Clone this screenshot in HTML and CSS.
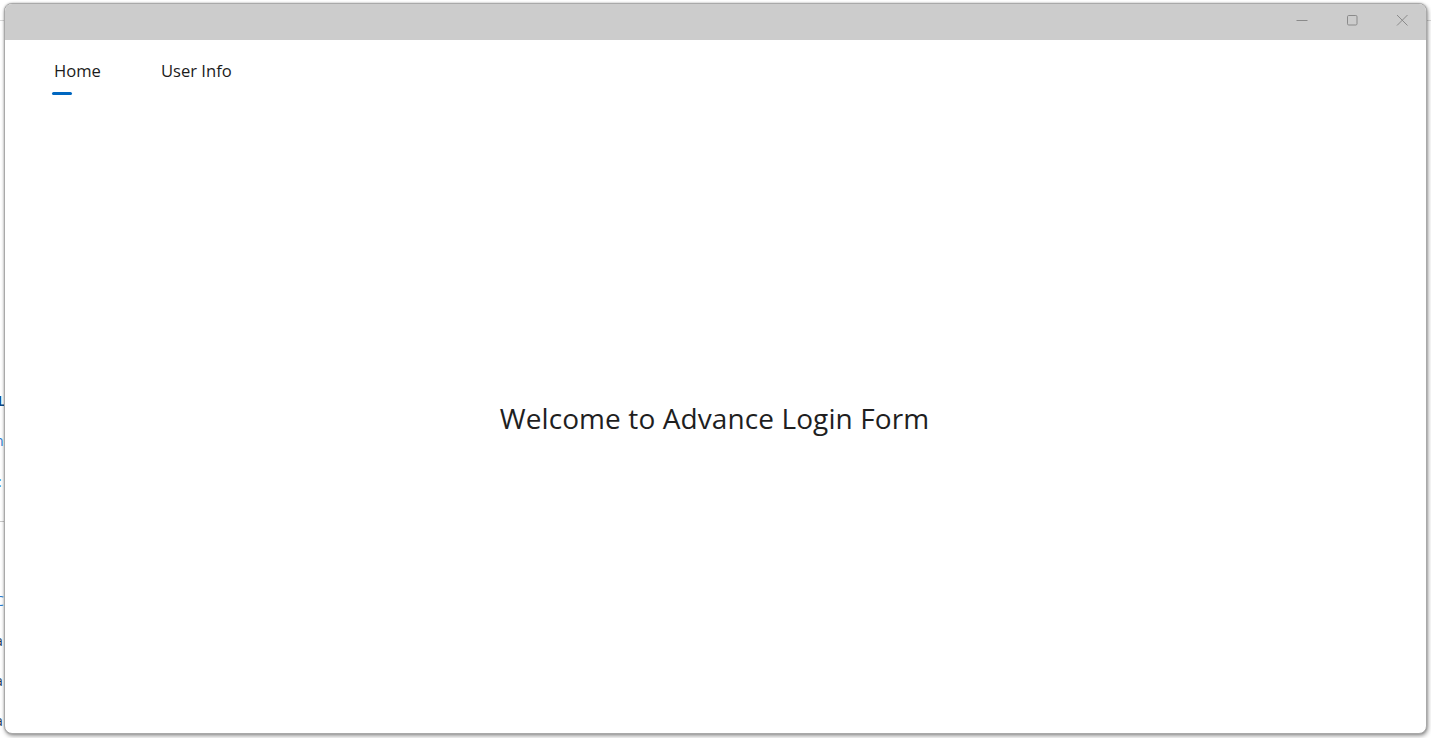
FILE: index.html
```html
<!DOCTYPE html>
<html lang="en">
<head>
<meta charset="utf-8">
<title>Advance Login Form</title>
<link rel="stylesheet" href="styles.css">
</head>
<body>
<div class="desktop">
  <div class="backapp">
    <div class="back-topline"></div>
    <div class="back-col">
      <span class="bt bt-dark b1">L</span>
      <span class="bt bt-blue b2">n</span>
      <span class="bt bt-blue b3">:</span>
      <div class="back-rule"></div>
      <span class="bt bt-blue b4">C</span>
      <span class="bt bt-dark b5">a</span>
      <span class="bt bt-dark b6">a</span>
      <span class="bt bt-dark b7">a</span>
    </div>
  </div>

  <div class="window">
    <div class="titlebar">
      <div class="controls">
        <span class="ctl">
          <svg width="12" height="12" viewBox="0 0 12 12"><path d="M0.5 6.5h11" stroke="#8a8a8a" stroke-width="1"/></svg>
        </span>
        <span class="ctl">
          <svg width="12" height="12" viewBox="0 0 12 12"><rect x="1.5" y="1.5" width="9.5" height="9.5" rx="1.2" fill="none" stroke="#8a8a8a" stroke-width="1"/></svg>
        </span>
        <span class="ctl">
          <svg width="12" height="12" viewBox="0 0 12 12"><path d="M1 1l10.5 10.5M11.5 1L1 11.5" stroke="#8a8a8a" stroke-width="1"/></svg>
        </span>
      </div>
    </div>
    <div class="content">
      <nav class="tabs">
        <div class="tab active"><span class="tab-label">Home</span><span class="indicator"></span></div>
        <div class="tab"><span class="tab-label">User Info</span></div>
      </nav>
      <main class="page">
        <h1 class="welcome">Welcome to Advance Login Form</h1>
      </main>
    </div>
  </div>
</div>
</body>
</html>
```

FILE: styles.css
```css
html, body {
  margin: 0;
  padding: 0;
}
body {
  width: 1431px;
  height: 738px;
  overflow: hidden;
  background: #ffffff;
  font-family: "Open Sans", "Noto Sans", sans-serif;
}
.desktop {
  position: relative;
  width: 1431px;
  height: 738px;
  background: #ffffff;
}
.backapp {
  position: relative;
  width: 100%;
  height: 100%;
}
.back-topline {
  position: absolute;
  left: 0;
  right: 0;
  top: 20px;
  height: 1px;
  background: #d8d8d8;
}
.back-col {
  position: absolute;
  left: -5px;
  top: 0;
  width: 20px;
  height: 738px;
  font-family: "Open Sans", sans-serif;
  font-size: 14px;
}
.bt {
  position: absolute;
  left: 0;
  line-height: 16px;
}
.bt-dark { color: #1a3a5a; }
.bt-blue { color: #2a7ad0; }
.b1 { top: 393px; left: 3px; color: #0a4a8a; font-weight: 600; }
.b2 { top: 433px; }
.b3 { top: 474px; left: 3px; }
.b4 { top: 593px; }
.b5 { top: 633px; }
.b6 { top: 673px; }
.b7 { top: 713px; }
.back-rule {
  position: absolute;
  left: 0;
  top: 521px;
  width: 20px;
  height: 1px;
  background: #c8c8c8;
}

.window {
  position: absolute;
  left: 4px;
  top: 3px;
  width: 1421px;
  height: 729px;
  border: 1px solid #a9a9a9;
  border-radius: 8px;
  overflow: hidden;
  background: #ffffff;
  display: flex;
  flex-direction: column;
  box-shadow: 1px 2px 4px rgba(0,0,0,0.4), 0 0 2px rgba(0,0,0,0.25);
}
.titlebar {
  height: 36px;
  flex: 0 0 36px;
  background: #cccccc;
  display: flex;
  justify-content: flex-end;
  align-items: center;
}
.controls {
  display: flex;
  align-items: center;
  gap: 38px;
  padding-right: 18px;
  margin-top: -5px;
}
.ctl {
  width: 12px;
  height: 12px;
  display: block;
}
.ctl svg { display: block; }

.content {
  flex: 1;
  display: flex;
  flex-direction: column;
}
.tabs {
  display: flex;
  gap: 60px;
  padding: 20px 0 0 49px;
  height: 43px;
}
.tab {
  position: relative;
  display: flex;
  flex-direction: column;
  font-size: 16.6px;
  color: #1b1b1b;
  line-height: 22px;
}
.tab-label { display: block; }
.indicator {
  display: block;
  width: 20px;
  height: 3px;
  border-radius: 2px;
  background: #0067c0;
  margin-top: 10px;
  margin-left: -2px;
}
.page {
  flex: 1;
  display: flex;
  align-items: center;
  justify-content: center;
}
.welcome {
  margin: 0;
  font-weight: 400;
  font-size: 28px;
  color: #1f1f1f;
  letter-spacing: 0.1px;
  padding-right: 2px;
}
```
